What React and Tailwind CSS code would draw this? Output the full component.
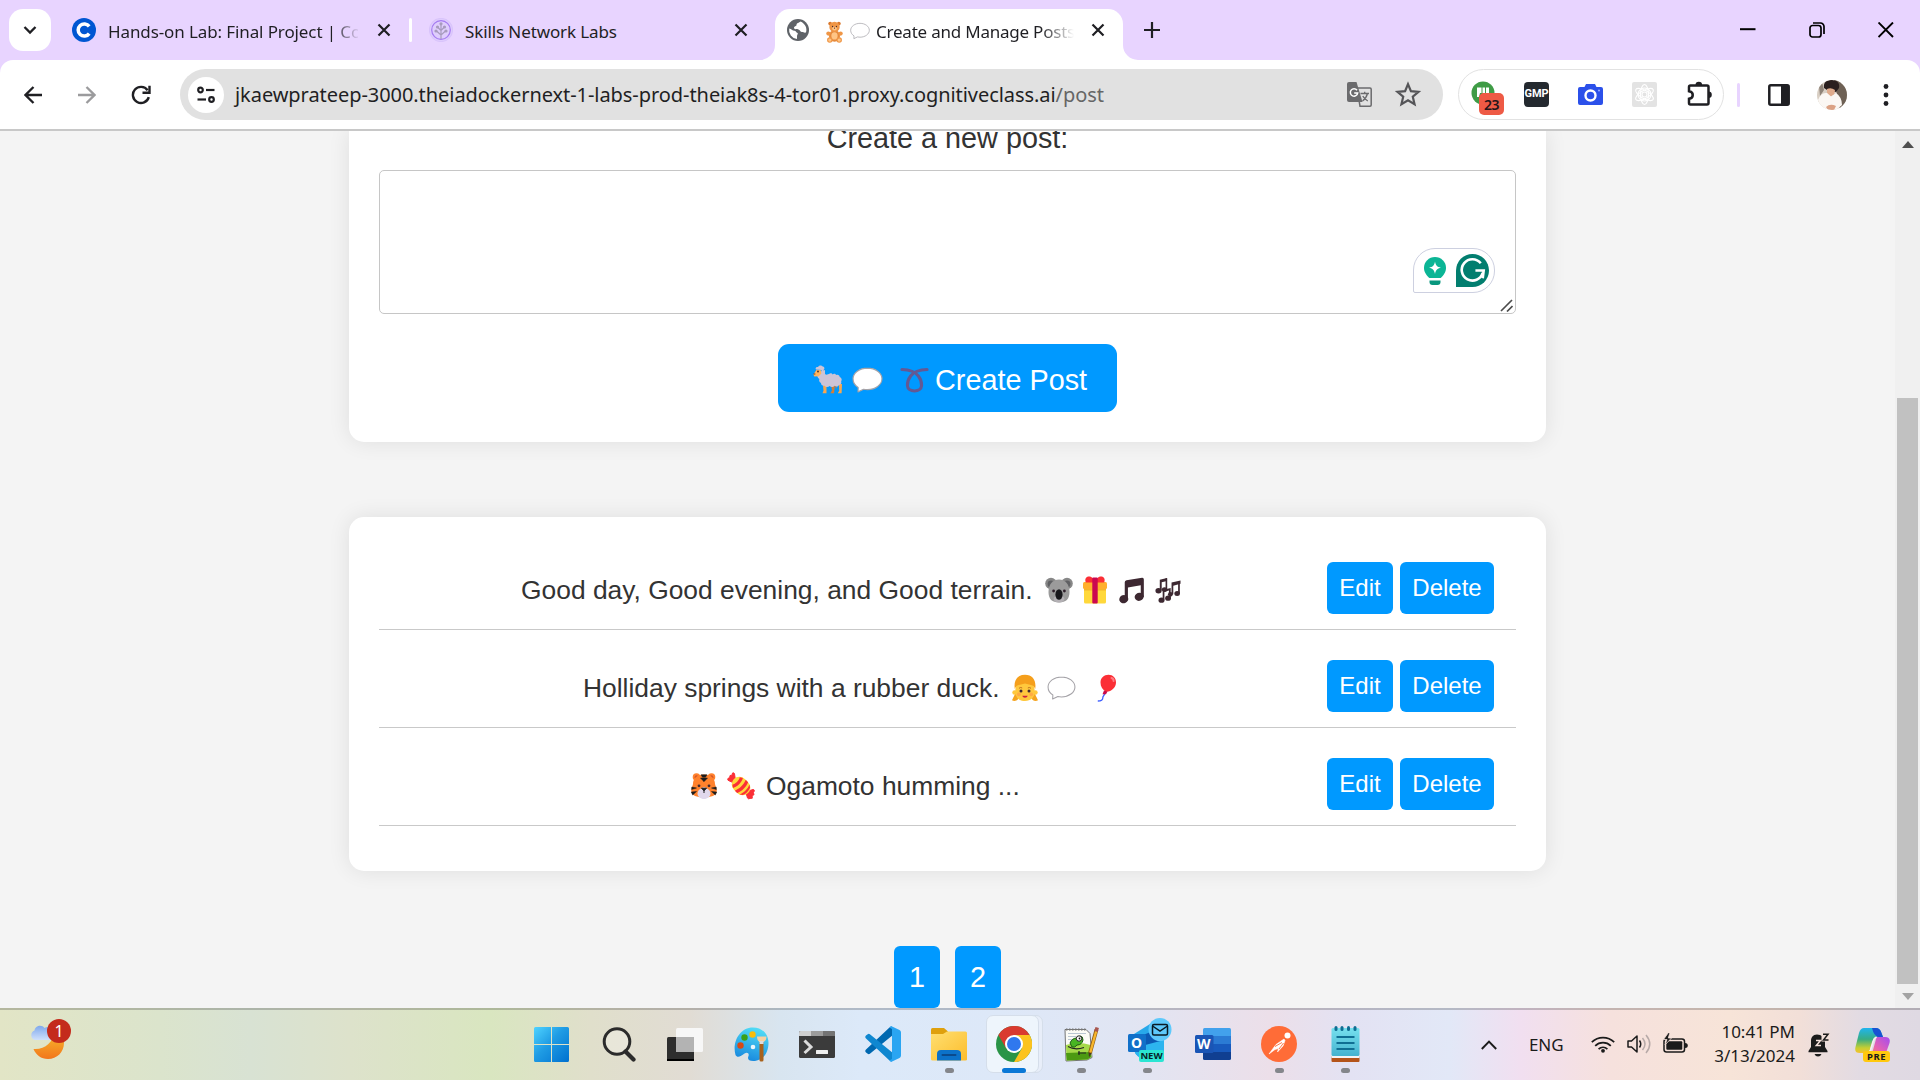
import React from "react";

/* ---------- emoji drawings ---------- */

function Bear({ className }) {
  return (
    <svg viewBox="0 0 24 28" className={className}>
      <ellipse cx="12" cy="19" rx="7" ry="7.5" fill="#e58a3c" />
      <circle cx="6.5" cy="3.2" r="2.4" fill="#d9772c" />
      <circle cx="17.5" cy="3.2" r="2.4" fill="#d9772c" />
      <circle cx="12" cy="7.5" r="6.6" fill="#ef9646" />
      <ellipse cx="12" cy="9.6" rx="3" ry="2.4" fill="#ffc585" />
      <circle cx="9.5" cy="7" r=".8" fill="#402a32" />
      <circle cx="14.5" cy="7" r=".8" fill="#402a32" />
      <circle cx="12" cy="9" r=".8" fill="#402a32" />
      <ellipse cx="12" cy="19" rx="4" ry="4.6" fill="#ffc585" />
      <circle cx="4.2" cy="16" r="2.7" fill="#ef9646" />
      <circle cx="19.8" cy="16" r="2.7" fill="#ef9646" />
      <circle cx="6" cy="24.3" r="3.5" fill="#ef9646" />
      <circle cx="18" cy="24.3" r="3.5" fill="#ef9646" />
      <circle cx="6" cy="24.3" r="2" fill="#ffc585" />
      <circle cx="18" cy="24.3" r="2" fill="#ffc585" />
    </svg>
  );
}

function Speech({ className }) {
  return (
    <svg viewBox="0 0 30 25" className={className}>
      <path
        d="M15 1C7.4 1 1 5.6 1 11.400c0 3.800 2 6.600 5 8.400l-.2 4.200 5.400-2.600c1.200.3 2.500.4 3.800.4 7.600 0 14-4.600 14-10.400S22.600 1 15 1Z"
        fill="#fff"
        stroke="#a5a3a8"
        strokeWidth="1.1"
        strokeLinejoin="round"
      />
    </svg>
  );
}

function Sheep({ className }) {
  return (
    <svg viewBox="0 0 30 29" className={className}>
      <path d="M10 20h3.500v8.200H9.500l1-2.500zM26 19h3l-.4 9.200h-3.800l1.400-2.500z" fill="#f9a74e" />
      <path d="M18 20h4l-1 8.200h-3.600l1.600-3zM22 19h3l-2 5z" fill="#d67d35" />
      <path
        d="M4 8l8-3v4c1.200 1.200 3 .4 4 .1 1-1.300 3-.9 3.600.3 1.200-1 3-.6 3.500.5 2-.8 3.500.3 3.600 2 2 .8 2.600 2.800 1.500 4.300.6 2-.6 3.700-2.300 3.800-.6 1.700-3 2-4.200.8-1.500 1.800-4 1.600-5 .3-1.600 1.500-4.200 1.300-5-.4-2 .6-3.700-.6-3.700-2.600-1.700-.8-2.300-2.400-1.600-4C4.400 12.900 4 10.500 4 8Z"
        fill="#cdc4d6"
      />
      <path d="M.5 9.500 3.500 4.800l4.500.4.300 3.400-2.500 2.600-4.500.2z" fill="#ffb45c" />
      <path d="M3 4.500C1.900 3 3.500 1.500 5 2c.4-1.600 3.600-2.200 4.700-.6C11.600 1.300 12 4 10.500 5c.8 1.300-.5 2.400-2 2.200V5Z" fill="#cdc4d6" />
      <circle cx="5" cy="6.500" r=".9" fill="#402a32" />
      <path d="M.4 8.500h2v1H.6z" fill="#7a4521" />
    </svg>
  );
}

function Curl({ className }) {
  return (
    <svg viewBox="0 0 30 26" className={className} fill="none" stroke="#635994" strokeWidth="3.200" strokeLinecap="round">
      <path d="M2 2.200c7 .2 13 1.500 17 6.600 2.300 3 3.500 6.600 3.300 10 -.2 3.500-3.300 5.500-7.300 5.500s-7.100-2-7.300-5.500c-.2-3.400 1-7 3.300-10 4-5.100 10-6.400 17-6.600" />
    </svg>
  );
}

function Koala({ className }) {
  return (
    <svg viewBox="0 0 28 28" className={className}>
      <circle cx="6" cy="7.500" r="5.800" fill="#878787" />
      <circle cx="22" cy="7.500" r="5.800" fill="#878787" />
      <circle cx="6" cy="8" r="3.400" fill="#5f6063" />
      <circle cx="22" cy="8" r="3.400" fill="#5f6063" />
      <path d="M14 3.500c6.500 0 10.500 5 10.500 12.500 0 7-3.500 10.500-10.500 10.500S3.500 23 3.500 16C3.500 8.500 7.500 3.500 14 3.500Z" fill="#9b9b9b" />
      <ellipse cx="14" cy="23" rx="5.500" ry="3.500" fill="#b4b1b5" />
      <ellipse cx="14" cy="18.500" rx="3.600" ry="5.200" fill="#17171b" />
      <circle cx="8.600" cy="15" r="1.400" fill="#2c1d28" />
      <circle cx="19.400" cy="15" r="1.400" fill="#2c1d28" />
    </svg>
  );
}

function Gift({ className }) {
  return (
    <svg viewBox="0 0 28 28" className={className}>
      <rect x="3" y="11" width="22" height="16.500" rx="1.500" fill="#ffd83b" />
      <path d="M3 12.500h22v2H3Z" fill="#f5b52a" />
      <rect x="2" y="6" width="24" height="7" rx="1.500" fill="#ffb02e" />
      <path d="M14 6.500H4.800C3.500 3 5 .5 8 .5s5 2.500 6 6Zm0 0h9.200C24.500 3 23 .5 20 .5s-5 2.500-6 6Z" fill="#fb2f36" />
      <rect x="11.300" y="1.500" width="5.400" height="26" rx="1" fill="#cb0850" />
    </svg>
  );
}

function Note({ className }) {
  return (
    <svg viewBox="0 0 28 28" className={className} fill="#3d2831">
      <path d="M7 5.500 Q7 3.700 8.800 3.400L25 .8Q26.800.6 26.800 2.500V21h-3.200V8.500L10.300 10.800V23H7Z" />
      <ellipse cx="6" cy="23" rx="4.700" ry="4.200" transform="rotate(-20 6 23)" />
      <ellipse cx="21.900" cy="20.500" rx="4.700" ry="4.200" transform="rotate(-20 22 20.500)" />
    </svg>
  );
}

function Notes({ className }) {
  return (
    <svg viewBox="0 0 28 28" className={className} fill="#3d2831">
      <path d="M6 2.800 13.500 1V4.200L8 5.500V14H6Z" />
      <path d="M12 1.300h1.700V13H12Z" />
      <ellipse cx="4.700" cy="14.200" rx="3.200" ry="2.800" />
      <ellipse cx="11" cy="13" rx="2.800" ry="2.500" />
      <path d="M9 13.500v10h1.800v-8.300l4.700-1.200V22h1.800V11.500Z" />
      <ellipse cx="7.800" cy="24" rx="3.100" ry="2.800" />
      <ellipse cx="14.600" cy="22" rx="3" ry="2.700" />
      <path d="M18.200 5.800 27.500 3.500V7L20 9V18h-1.800Z" />
      <path d="M25 5h1.800v12H25Z" />
      <ellipse cx="17" cy="18" rx="2.500" ry="2.400" />
      <ellipse cx="24" cy="17" rx="2.900" ry="2.600" />
    </svg>
  );
}

function Girl({ className }) {
  return (
    <svg viewBox="0 0 28 28" className={className}>
      <path d="M4.500 19 1 26.200c2 1.300 5.400 1 6.700-2.200ZM23.500 19l3.500 7.200c-2 1.300-5.400 1-6.700-2.200Z" fill="#f5a41f" />
      <circle cx="3.600" cy="18.500" r="2.300" fill="#ffc83d" />
      <circle cx="24.400" cy="18.500" r="2.300" fill="#ffc83d" />
      <path d="M14 7c6.500 0 9.700 4 9.700 10.300 0 6.200-3.900 9.700-9.700 9.700s-9.700-3.500-9.700-9.700C4.300 11 7.500 7 14 7Z" fill="#ffc83d" />
      <path d="M3.800 15C2.500 7 6 .8 14 .8S25.500 7 24.200 15C23 11.800 21.500 11.200 19 10.800L14 9.500l-5 1.300c-2.500.4-4 1-5.200 4.200Z" fill="#f59f1c" />
      <path d="M8 14.300q1.700-1.500 3.200-.3M20 14.300q-1.700-1.500-3.200-.3" fill="none" stroke="#b5651d" strokeWidth=".9" />
      <circle cx="10" cy="17" r="1.500" fill="#402a32" />
      <circle cx="18" cy="17" r="1.500" fill="#402a32" />
      <circle cx="7.800" cy="20.300" r="1.900" fill="#ff8b4a" opacity=".5" />
      <circle cx="20.200" cy="20.300" r="1.900" fill="#ff8b4a" opacity=".5" />
      <path d="M11.300 21.800h5.400c-.5 2.600-4.900 2.600-5.400 0Z" fill="#c9203f" />
    </svg>
  );
}

function Balloon({ className }) {
  return (
    <svg viewBox="0 0 20 28" className={className}>
      <path d="M7.800 18.500c.5 3-2.300 2.800-2 5.500 0 2.300-1.500 3-5 3" fill="none" stroke="#3f5fff" strokeWidth="1.300" />
      <path d="M11.500.8C16 .8 19 4 19 8.500c0 4.800-4.300 9-9.500 9.300C5.500 16 3.500 12.500 3.500 8.500c0-4.500 3.500-7.700 8-7.700Z" fill="#fb2f36" />
      <path d="M7 16.500l3.500 1-1.500 2.800H5.500Z" fill="#ca0b4a" />
      <path d="M14.500 4c1.600.4 2.200 1.600 2 3" fill="none" stroke="#ff7b83" strokeWidth="2" strokeLinecap="round" />
    </svg>
  );
}

function Tiger({ className }) {
  return (
    <svg viewBox="0 0 28 28" className={className}>
      <circle cx="6.500" cy="5" r="3.800" fill="#ff822d" />
      <circle cx="21.500" cy="5" r="3.800" fill="#ff822d" />
      <circle cx="6.500" cy="5.200" r="1.900" fill="#d3552b" />
      <circle cx="21.500" cy="5.200" r="1.900" fill="#d3552b" />
      <path d="M14 2.500c7 0 11 4 11 9.500l1.800 6.500c0 5-6 7-12.800 7s-12.800-2-12.800-7L3 12c0-5.500 4-9.500 11-9.500Z" fill="#ff822d" />
      <path d="M14 15c4 1.500 6.500 3.500 6.500 6.500S17.500 27 14 27s-6.500-2.500-6.500-5.500S10 16.500 14 15Z" fill="#e1d8ec" />
      <path d="M11 2.800h6l-1.500 2.400h-3ZM10.500 6h7l-2.300 2.500L14 9.700l-1.200-1.200ZM1.800 15l4.700 1-4.900 1.500ZM1.300 20l5.200-.5L2.700 23ZM26.200 15l-4.700 1 4.900 1.500ZM26.700 20l-5.200-.5 3.800 3.500Z" fill="#1c1c1c" stroke="#1c1c1c" strokeWidth=".5" />
      <path d="M11.500 16.200h5L14 18.800Z" fill="#1c1c1c" stroke="#1c1c1c" strokeLinejoin="round" />
      <path d="M14 18v3" stroke="#1c1c1c" />
      <circle cx="9" cy="13.800" r="1.400" fill="#402a32" />
      <circle cx="19" cy="13.800" r="1.400" fill="#402a32" />
    </svg>
  );
}

function Candy({ className }) {
  return (
    <svg viewBox="0 0 28 28" className={className}>
      <path d="M8.500 8.500 7.500 1.800Q7 .3 5.500 1L5 3.200 3 3.500 2.700 5.500.9 6.500Q.2 8.500 2 8.800L7 11ZM19.500 19.500 26 17.500Q27.500 17.500 27.300 19l-1 1.800.8 1.700-2 1.500.2 2.200-2.300.2Q21.500 27.500 20.500 26L19 21Z" fill="#fb2f36" stroke="#fb2f36" strokeLinejoin="round" />
      <g transform="rotate(45 14 14)">
        <rect x="4" y="6.300" width="20" height="15.400" rx="7.700" fill="#ffd83b" />
        <path d="M7 8.800C8.800 11.500 8.800 16.500 7 19.200L9.700 21C12 17 12 11 9.700 7ZM13 6.300c2 4.500 2 10.900 0 15.400h3.300c2-4.500 2-10.900 0-15.400ZM19 7c1.900 4.200 1.900 9.800 0 14l2.600-1.800c1.400-3.200 1.400-7.200 0-10.400Z" fill="#fb2f36" />
      </g>
    </svg>
  );
}

/* ---------- browser chrome ---------- */

const CloseX = ({ size = 16, sw = 2.2 }) => (
  <svg width={size} height={size} viewBox="0 0 16 16" stroke="#1f1f23" strokeWidth={sw} fill="none" className="shrink-0">
    <path d="M2.500 2.500 13.500 13.500M13.500 2.500 2.500 13.500" />
  </svg>
);

function TabStrip() {
  return (
    <div className="flex h-[60px] w-full items-start bg-[#e8d4ff] pt-[9px] text-[17px] text-[#1f1f23]">
      <div className="ml-[9px] flex size-[42px] items-center justify-center rounded-[14px] bg-white">
        <svg width="14" height="10" viewBox="0 0 14 10" fill="none" stroke="#1f1f23" strokeWidth="2.300">
          <path d="M1.500 2 7 7.500 12.500 2" />
        </svg>
      </div>

      <div className="ml-[21px] flex h-[42px] w-[340px] items-center">
        <svg width="24" height="24" viewBox="0 0 24 24" className="shrink-0">
          <circle cx="12" cy="12" r="12" fill="#0056d2" />
          <path d="M17.200 8.400A6.100 6.100 0 1 0 17.200 15.600" fill="none" stroke="#fff" strokeWidth="3.500" />
        </svg>
        <div className="ml-3 mt-[3px] w-[252px] overflow-hidden whitespace-nowrap tracking-[-0.110px] [mask-image:linear-gradient(to_right,#000_224px,transparent_252px)]">
          Hands-on Lab: Final Project | Coursera
        </div>
        <div className="ml-[18px]"><CloseX /></div>
        <div className="ml-[17px] h-6 w-[3px] rounded-full bg-white" />
      </div>

      <div className="flex h-[42px] w-[362px] items-center pl-[17px]">
        <svg width="24" height="24" viewBox="0 0 24 24" className="shrink-0" fill="none" stroke="#a57bf0" strokeWidth="1.200">
          <circle cx="12" cy="12" r="11.500" fill="#dfcdfd" stroke="#d9c4fb" />
          <circle cx="12" cy="12" r="9.300" />
          <path d="M12 21V7M12 17 7.500 13M12 17l4.500-4M12 12.500 9 9.500M12 12.500l3-3" stroke="#a79bbd" />
          <g fill="#a79bbd" stroke="none">
            <circle cx="12" cy="5.800" r="1.600" /><circle cx="8.500" cy="9" r="1.600" /><circle cx="15.500" cy="9" r="1.600" />
            <circle cx="7" cy="13" r="1.600" /><circle cx="17" cy="13" r="1.600" />
          </g>
        </svg>
        <span className="ml-[12px] mt-[3px] w-[268px] whitespace-nowrap tracking-[-0.110px]">Skills Network Labs</span>
        <CloseX />
      </div>

      <div className="relative ml-px flex h-[51px] w-[348px] items-start rounded-t-[15px] bg-white">
        <svg className="absolute -left-[15px] bottom-0" width="15" height="15"><path d="M15 0V15H0A15 15 0 0 0 15 0Z" fill="#fff" /></svg>
        <svg className="absolute -right-[15px] bottom-0" width="15" height="15"><path d="M0 0V15H15A15 15 0 0 1 0 0Z" fill="#fff" /></svg>
        <div className="flex h-[42px] items-center pl-[12px]">
          <svg width="22" height="22" viewBox="0 0 22 22" className="shrink-0">
            <circle cx="11" cy="11" r="11" fill="#5f6368" />
            <path d="M13.500 2.500C12 4 9.500 3.800 9.500 6c0 1.500-2.500 1-2.500 3 0 1.500 3 1 4.500 1.500 2 .6 1.500 2.500 3.500 2.500 1.500 0 2 1 4 .5 1.500-4.500-1-9-5.500-11ZM2.200 9.500c2.300.5 3 2 5.300 2.300 1.500.2 1.500 1.700 3 2.200 1 .5-.5 1.500-.5 3v3A9 9 0 0 1 2.200 9.500Z" fill="#fff" />
          </svg>
          <Bear className="ml-[16px] mt-[3px] h-[22px] w-[19px] shrink-0" />
          <Speech className="ml-[6px] mt-[2px] h-[18px] w-[20px] shrink-0" />
          <div className="ml-[6px] mt-[3px] w-[198px] overflow-hidden whitespace-nowrap tracking-[-0.220px] [mask-image:linear-gradient(to_right,#000_165px,transparent_198px)]">
            Create and Manage Posts
          </div>
          <div className="ml-[16px]"><CloseX /></div>
        </div>
      </div>

      <svg width="16" height="16" viewBox="0 0 16 16" className="ml-[21px] mt-[13px]" stroke="#1f1f23" strokeWidth="2.200">
        <path d="M8 0v16M0 8h16" />
      </svg>

      <div className="ml-auto mr-[26px] mt-[13px] flex h-4 items-center gap-[53px]">
        <svg width="16" height="16" viewBox="0 0 16 16"><rect x="0" y="6.200" width="15.500" height="2" fill="#000" /></svg>
        <svg width="16" height="16" viewBox="0 0 16 16" fill="none" stroke="#000" strokeWidth="1.700">
          <rect x="1" y="3.500" width="11" height="11.500" rx="2.500" />
          <path d="M4 1h7.500A3.500 3.500 0 0 1 15 4.500V12" />
        </svg>
        <svg width="16" height="16" viewBox="0 0 16 16" stroke="#000" strokeWidth="1.900"><path d="M.5.5l14.500 14.500M15 .5.5 15" /></svg>
      </div>
    </div>
  );
}

function Extensions() {
  return (
    <div className="ml-[15px] flex h-[51px] w-[266px] items-center rounded-full border-[1.500px] border-[#e2e2e2] pl-[12px]">
      <div className="relative h-[27px] w-[35px]">
        <svg width="24" height="24" viewBox="0 0 24 24" className="absolute left-0 top-0">
          <circle cx="12" cy="12" r="11.500" fill="#3f9c46" />
          <path d="M6 6.500h12V12H9l-1 4H6Z" fill="#fff" />
          <path d="M11 6v6M14.500 6v6" stroke="#3f9c46" />
        </svg>
        <div className="absolute left-[8px] top-[12px] flex h-[22px] w-[25px] items-center justify-center rounded-[5px] bg-[#ee5a45] text-[14px] font-semibold tracking-[-0.500px] text-[#26151a]">23</div>
      </div>
      <div className="ml-[18px] flex h-[25px] w-[25px] items-center justify-center rounded-[4px] bg-[#24292f] font-['Roboto'] text-[11px] font-bold text-white">GMP</div>
      <svg width="25" height="25" viewBox="0 0 25 25" className="ml-[29px]">
        <path d="M2 5h4.500L8 2h9l1.500 3H23q2 0 2 2v14q0 2-2 2H2q-2 0-2-2V7q0-2 2-2Z" fill="#2b50ea" />
        <circle cx="12.500" cy="13.500" r="5" fill="none" stroke="#fff" strokeWidth="2.400" />
        <circle cx="21" cy="8.500" r="1" fill="#9db0ff" />
      </svg>
      <svg width="25" height="25" viewBox="0 0 25 25" className="ml-[29px]">
        <rect width="25" height="25" rx="2" fill="#e3e3e3" />
        <g fill="none" stroke="#fff" strokeWidth="1.100">
          <ellipse cx="12.500" cy="12.500" rx="10" ry="4" transform="rotate(30 12.500 12.500)" />
          <ellipse cx="12.500" cy="12.500" rx="10" ry="4" transform="rotate(90 12.500 12.500)" />
          <ellipse cx="12.500" cy="12.500" rx="10" ry="4" transform="rotate(150 12.500 12.500)" />
          <circle cx="12.500" cy="12.500" r="2.500" />
          <circle cx="12.500" cy="12.500" r="6.500" />
        </g>
      </svg>
      <svg width="26" height="26" viewBox="0 0 26 26" className="mb-[3px] ml-[29px]">
        <path d="M4.500 5.500H21a1.500 1.500 0 0 1 1.500 1.500V23a1.500 1.500 0 0 1-1.500 1.500H4.500A1.500 1.500 0 0 1 3 23V18.800c5-.8 5-6.800 0-7.600V7a1.500 1.500 0 0 1 1.500-1.500Z" fill="none" stroke="#1f1f23" strokeWidth="2.500" />
        <path d="M9.500 5a3.300 3.300 0 0 1 6.600 0ZM22.500 11.500a3.300 3.300 0 0 1 0 6.600Z" fill="#1f1f23" />
      </svg>
    </div>
  );
}

function Toolbar() {
  return (
    <div className="h-[69px] w-full bg-[#e8d4ff]">
      <div className="flex h-[69px] w-full items-center rounded-t-[13px] bg-white pl-6">
        <svg width="18" height="18" viewBox="0 0 18 18" fill="none" stroke="#1f1f23" strokeWidth="2.300">
          <path d="M18 9H1.800M9.500 1 1.500 9l8 8" />
        </svg>
        <svg width="18" height="18" viewBox="0 0 18 18" fill="none" stroke="#9b9b9d" strokeWidth="2.300" className="ml-[36px]">
          <path d="M0 9h16.200M8.500 1l8 8-8 8" />
        </svg>
        <svg width="20" height="20" viewBox="0 0 20 20" fill="none" stroke="#1f1f23" strokeWidth="2.400" className="ml-[35px]">
          <path d="M17.800 12.200A8.100 8.100 0 1 1 16.600 5.200" />
          <path d="M18.500.800V7.800H11.500" />
        </svg>
        <div className="ml-[29px] flex h-[51px] w-[1263px] shrink-0 items-center rounded-full bg-[#e1e1e1] pl-2">
          <div className="flex size-9 shrink-0 items-center justify-center rounded-full bg-white">
            <svg width="18" height="18" viewBox="0 0 18 18" fill="none" stroke="#1f1f23" strokeWidth="2.200">
              <circle cx="3.500" cy="4" r="2.300" /><path d="M9 4h8.500" />
              <circle cx="14.500" cy="13.500" r="2.300" /><path d="M.5 13.500H9" />
            </svg>
          </div>
          <span className="ml-[11px] w-[1101px] shrink-0 whitespace-nowrap text-[20px] tracking-[-0.060px] text-[#1f1f23]">
            jkaewprateep-3000.theiadockernext-1-labs-prod-theiak8s-4-tor01.proxy.cognitiveclass.ai<span className="text-[#666]">/post</span>
          </span>
          <svg width="25" height="25" viewBox="0 0 25 25" className="ml-[11px]">
            <path d="M10 6h13q1.200 0 1.200 1.200V23q0 1.200-1.200 1.200H13Z" fill="none" stroke="#6b6b6d" strokeWidth="1.500" />
            <path d="M2 0H9.500L15.500 20H2Q0 20 0 18V2Q0 0 2 0Z" fill="#6b6b6d" />
            <path d="M10 8.200A3.700 3.700 0 1 0 10.700 11H7.200" fill="none" stroke="#fff" strokeWidth="1.500" />
            <path d="M13.500 11.500H22M17.700 9.800v1.700M20.500 11.500c-.8 3.400-2.800 5.800-5 7.500M15.800 14c1 2 3 4 5 5" fill="none" stroke="#6b6b6d" strokeWidth="1.300" />
          </svg>
          <svg width="28" height="28" viewBox="0 0 24 24" className="ml-[22px]" fill="none" stroke="#555558" strokeWidth="1.900">
            <path d="m12 2.700 2.500 6 6.500.6-4.900 4.200 1.500 6.300L12 16.500l-5.600 3.300 1.500-6.300L3 9.300l6.500-.6Z" />
          </svg>
        </div>
        <Extensions />
        <div className="ml-[13px] h-6 w-[3px] rounded-full bg-[#e8d4ff]" />
        <svg width="22" height="22" viewBox="0 0 22 22" className="ml-[28px]">
          <rect x="1.300" y="1.300" width="19.400" height="19.400" rx="1.500" fill="none" stroke="#1f1f23" strokeWidth="2.500" />
          <rect x="13" y="1" width="8" height="20" fill="#1f1f23" />
        </svg>
        <svg width="30" height="30" viewBox="0 0 30 30" className="ml-[27px]">
          <clipPath id="avatar"><circle cx="15" cy="15" r="15" /></clipPath>
          <g clipPath="url(#avatar)">
            <rect width="30" height="30" fill="#d9cfc4" />
            <path d="M17 0h13v30h-7Z" fill="#6e6155" />
            <path d="M2 6 5 2l2 8-4 6Z" fill="#8f8378" />
            <path d="M7 8C6 2 10 0 15 0s8 3 7 8l-3 4-9-2Z" fill="#2a1f1e" />
            <path d="M10 9q4-2 8 1l-1 5-4 1.500-3-3.500Z" fill="#e0ab8c" />
            <path d="M1 20q3-8 9-7l4 3.500 5-3.500q6 4 6 12l-6 5H5Z" fill="#fbf7f3" />
            <path d="M9 27q4-4 10-1l-2 4h-6Z" fill="#dba184" />
          </g>
        </svg>
        <svg width="6" height="24" viewBox="0 0 6 24" className="ml-[36px]" fill="#1f1f23">
          <circle cx="3" cy="3.500" r="2.400" /><circle cx="3" cy="12" r="2.400" /><circle cx="3" cy="20.500" r="2.400" />
        </svg>
      </div>
    </div>
  );
}

/* ---------- web page ---------- */

const card = "w-[1197px] shrink-0 bg-white px-[30px] shadow-[0_0_22px_rgba(0,0,0,0.09)]";

function PostRow({ children, indent }) {
  return (
    <div className="flex h-[98px] items-start border-b border-[#c9c9c9] pt-[30px]">
      <div className={"flex h-14 w-[948px] shrink-0 items-center whitespace-nowrap text-[26.400px] leading-[56px] text-[#333] " + indent}>
        {children}
      </div>
      <button className="h-[52px] w-[66px] rounded-[6px] bg-[#0099ff] text-[24px] leading-[52px] text-white">Edit</button>
      <button className="ml-[7px] h-[52px] w-[94px] rounded-[6px] bg-[#0099ff] text-[24px] leading-[52px] text-white">Delete</button>
    </div>
  );
}

function Grammar() {
  return (
    <div className="absolute right-[20px] top-[77px] flex h-[45px] w-[82px] items-center rounded-bl-[2px] rounded-br-[22px] rounded-t-[22px] border-[1.500px] border-[#cdd0e0] bg-white pl-[9px]">
      <svg width="24" height="30" viewBox="0 0 24 30">
        <path d="M12 1C5.900 1 1 5.800 1 11.800c0 4.600 2.500 7.600 5.300 10.200h11.400c2.800-2.600 5.300-5.600 5.300-10.200C23 5.800 18.100 1 12 1Z" fill="#0bb595" />
        <path d="M6.500 24.500h11v1.500q0 3-3 3h-5q-3 0-3-3Z" fill="#08977e" />
        <path d="M12 5.500c.8 4 2 5.300 6 6.200-4 .9-5.200 2.200-6 6.200-.8-4-2-5.300-6-6.200 4-.9 5.200-2.200 6-6.200Z" fill="#fff" />
      </svg>
      <svg width="33" height="33" viewBox="0 0 34 34" className="ml-[9px]">
        <path d="M17 0A17 17 0 0 1 17 34H0V17A17 17 0 0 1 17 0Z" fill="#027e6f" />
        <path d="M25.500 9.500A11 11 0 1 0 27.500 19.500" fill="none" stroke="#fff" strokeWidth="2.700" />
        <path d="M20 17h8.500l-1 8" fill="none" stroke="#fff" strokeWidth="2.700" />
      </svg>
    </div>
  );
}

function Page() {
  return (
    <div className="flex h-[877px] w-full overflow-hidden bg-[#f4f4f4] font-['Liberation_Sans',sans-serif]">
      <div className="flex w-[1895px] flex-col items-center">
        <div className={card + " h-[311px] rounded-b-[15px] text-center"}>
          <div className="-mt-[10px] h-[49px] text-[28.800px] leading-[34px] text-[#333]">Create a new post:</div>
          <div className="relative h-[144px] w-full rounded-[5px] border border-[#c6c6c6]">
            <Grammar />
            <svg width="13" height="13" viewBox="0 0 13 13" className="absolute bottom-[1px] right-[2px]" stroke="#4c4c4c" strokeWidth="1.700">
              <path d="M1 12 12 1M7 12.500l5.500-5.500" />
            </svg>
          </div>
          <button className="mx-auto mt-[30px] flex h-[68px] w-[339px] items-center rounded-[11px] bg-[#0099ff] pl-[35px] pt-[4px] text-[28.800px] leading-[36px] text-white">
            <Sheep className="mb-px h-[29px] w-[30px]" />
            <Speech className="ml-[9px] h-[26px] w-[31px]" />
            <Curl className="ml-[17px] h-[26px] w-[29px]" />
            <span className="ml-[6px] whitespace-nowrap">Create Post</span>
          </button>
        </div>

        <div className={card + " mt-[75px] h-[354px] rounded-[15px] pt-[15px]"}>
          <PostRow indent="pl-[142px]">
            Good day, Good evening, and Good terrain.
            <Koala className="ml-[12px] size-[28px]" />
            <Gift className="ml-[8px] size-[28px]" />
            <Note className="ml-[9px] size-[27px]" />
            <Notes className="ml-[9px] size-[27px]" />
          </PostRow>
          <PostRow indent="pl-[204px]">
            Holliday springs with a rubber duck.
            <Girl className="ml-[11px] size-[28px]" />
            <Speech className="ml-[8px] h-[24px] w-[29px]" />
            <Balloon className="ml-[21px] h-[28px] w-[20px]" />
          </PostRow>
          <PostRow indent="pl-[311px]">
            <Tiger className="size-[28px]" />
            <Candy className="ml-[9px] size-[28px]" />
            <span className="ml-[11px]">Ogamoto humming ...</span>
          </PostRow>
        </div>

        <div className="mt-[75px] flex gap-[15px]">
          {["1", "2"].map((n) => (
            <button key={n} className="h-[62px] w-[46px] rounded-[6px] bg-[#0099ff] text-[28.800px] leading-[62px] text-white">{n}</button>
          ))}
        </div>
      </div>

      <div className="flex w-[25px] flex-col items-center bg-[#f0f0f0]">
        <svg width="12" height="7" viewBox="0 0 12 7" className="mt-[10px]"><path d="M0 7 6 0l6 7Z" fill="#505050" /></svg>
        <div className="mt-[250px] h-[586px] w-[21px] bg-[#c1c1c1]" />
        <svg width="12" height="7" viewBox="0 0 12 7" className="mt-[9px]"><path d="M0 0h12L6 7Z" fill="#a3a3a3" /></svg>
      </div>
    </div>
  );
}

/* ---------- taskbar ---------- */

function Slot({ children, dot }) {
  return (
    <div className="relative flex h-[68px] w-[66px] items-center justify-center">
      {children}
      {dot && <div className="absolute bottom-[5px] left-[29px] h-[5px] w-[9px] rounded-full bg-[#84868b]" />}
    </div>
  );
}

function WindowsIcon() {
  return (
    <svg width="35" height="35" viewBox="0 0 35 35" className="-ml-[3px] mt-px">
      <linearGradient id="win" x1="0" y1="0" x2="1" y2="1">
        <stop offset="0" stopColor="#4fd3ff" /><stop offset=".45" stopColor="#1f9ce4" /><stop offset="1" stopColor="#0070cf" />
      </linearGradient>
      <path d="M1.500 0H17v17H0V1.500Q0 0 1.500 0ZM18 0h15.500Q35 0 35 1.500V17H18ZM0 18h17v17H1.500Q0 35 0 33.500ZM18 18h17v15.500q0 1.500-1.500 1.500H18Z" fill="url(#win)" />
    </svg>
  );
}

function PaintIcon() {
  return (
    <svg width="35" height="35" viewBox="0 0 35 35">
      <linearGradient id="paint" x1=".6" y1="0" x2=".3" y2="1">
        <stop offset="0" stopColor="#51dcf6" /><stop offset="1" stopColor="#1686dd" />
      </linearGradient>
      <path d="M19 .5C28 .5 34.500 7 34.500 16c0 8-4 17-13.500 18-6 .5-8-1.500-6.500-5 1-2.800-1.500-4.500-4-2.500C7 29 3.500 31.500 1.500 28-2 16 5 .5 19 .5Z" fill="url(#paint)" />
      <circle cx="6.500" cy="18.500" r="3.200" fill="#d84a16" />
      <circle cx="10.500" cy="10.500" r="3.200" fill="#3aa018" />
      <circle cx="18.500" cy="7.500" r="3.200" fill="#f8bd09" />
      <circle cx="19" cy="20" r="2.300" fill="#eaf6fc" />
      <rect x="25.500" y="14" width="4" height="20.500" rx="1.500" fill="#a8621c" />
      <path d="M23 9.500h9.500q0 4-3 5.500h-4q-2.500-1.500-2.500-5.500Z" fill="#f5d2a4" />
      <rect x="25.500" y="14" width="4" height="3" fill="#ddd" />
    </svg>
  );
}

function OutlookIcon() {
  return (
    <div className="relative ml-[6px] h-[44px] w-[44px]">
      <svg width="44" height="44" viewBox="0 0 44 44" className="absolute left-0 top-0">
        <path d="M6 16 22 6l14 10v23H12q-6-3-6-8Z" fill="#28a8ea" />
        <path d="M15 17 33 10l3 12-18 9Z" fill="#0c59b4" />
        <path d="M6 30 36 22v18H12q-6-4-6-10Z" fill="#2db4ef" />
        <rect x="0" y="16" width="18" height="18" rx="1.500" fill="#1170c9" />
        <circle cx="32" cy="11.500" r="11.500" fill="#5ec9fb" />
        <rect x="24.500" y="6.500" width="15" height="10.500" rx="1.500" fill="none" stroke="#0a1b26" strokeWidth="1.500" />
        <path d="m24.500 8 7.500 5 7.500-5" fill="none" stroke="#0a1b26" strokeWidth="1.500" />
      </svg>
      <span className="absolute left-[3px] top-[17px] text-[14px] font-bold leading-[16px] text-white">O</span>
      <span className="absolute left-[11px] top-[32px] h-[12px] w-[25px] rounded-[2px] bg-[#2be5d3] text-center text-[9.500px] font-bold leading-[12px] text-[#06252a]">NEW</span>
    </div>
  );
}

function NotepadPlusIcon() {
  return (
    <svg width="35" height="35" viewBox="0 0 35 35">
      <path d="M1 2.500h21l4 4 2 24-5 2.500-21 1Z" fill="#fbfbf6" stroke="#666" strokeWidth=".9" />
      <path d="M2 18q12-4 24.500 0l1 12-4 2.500-21 .9Z" fill="#a5d949" />
      <path d="M2 26l24.500-1 .8 5-4 2.500-20.500 1Z" fill="#4c9a12" />
      <path d="M4 6.500h18M4 9.500h8M4 12.500h5" stroke="#b9c6d2" />
      <path d="M6 16q2-5 7-5l3-2q3 0 3 4-1 5-6 5-2 3-5 2Z" fill="#48b522" stroke="#1c5c12" />
      <circle cx="15" cy="11.500" r="2.700" fill="#fff" stroke="#222" /><circle cx="15.500" cy="11.500" r=".9" fill="#111" />
      <path d="M4 19.500q7 4 16 1M14 26h8M15 24v4" stroke="#222" strokeWidth="1.200" fill="none" />
      <path d="M2 2.500h20" stroke="#777" strokeWidth="2" strokeDasharray="1.500 1.500" />
      <path d="M32.500 2.500 26 26" stroke="#8b5a12" strokeWidth="3.800" /><path d="M32.500 3 26.300 25.500" stroke="#f8b62c" strokeWidth="2.400" />
      <path d="M33.200.500 32 4.500" stroke="#a8564e" strokeWidth="3.600" />
      <path d="m24.500 25.500 3 .8-2.500 4Z" fill="#4a3520" />
    </svg>
  );
}

function Taskbar() {
  return (
    <div className="flex h-[72px] w-full items-start border-t-2 border-black/20 bg-[linear-gradient(to_right,#e2e5c6_0px,#dbe4cc_160px,#d8e2d3_250px,#dde2cb_350px,#d9e6c0_490px,#e0dfcb_590px,#e1dcd4_690px,#d8e5f0_780px,#dce9f9_860px,#dde8f8_1000px,#e1e5f3_1130px,#ecdfe9_1270px,#e3e2f3_1350px,#e2e8f7_1450px,#f1dff0_1520px,#f6e1dd_1610px,#f7e4d8_1730px,#f2dfd8_1800px,#e2dbe3_1860px,#dfd9e3_1920px)] bg-origin-border">
      <div className="w-[520px] pl-[30px] pt-[9px]">
        <div className="relative h-[41px] w-[42px]">
          <svg width="42" height="41" viewBox="0 0 42 41">
            <linearGradient id="moon" x1="0" y1="0" x2="0" y2="1"><stop offset="0" stopColor="#f8c02e" /><stop offset="1" stopColor="#f2761c" /></linearGradient>
            <linearGradient id="cloud" x1="0" y1="0" x2="0" y2="1"><stop offset="0" stopColor="#7fa8ec" /><stop offset="1" stopColor="#cfe0fb" /></linearGradient>
            <path d="M24 11c6 3 10 7 10 13 0 9-7 16-16 16C11 40 6 36 3.500 30 14 31 24 24 24 11Z" fill="url(#moon)" />
            <path d="M5 21a5 5 0 0 1-.5-9.500C5 6.500 12 5 14.500 9c4-2.500 9 .5 8.500 5v7Z" fill="url(#cloud)" />
          </svg>
          <div className="absolute left-[17px] top-0 flex size-[24px] items-center justify-center rounded-full bg-[#c42b1c] text-[16px] leading-none text-white">1</div>
        </div>
      </div>

      <div className="flex">
        <Slot><WindowsIcon /></Slot>
        <Slot>
          <svg width="34" height="35" viewBox="0 0 34 35" fill="none" stroke="#2b2b2b">
            <circle cx="15" cy="14.500" r="12.800" strokeWidth="3" fill="#ffffff40" /><path d="m23.500 24.500 8 8" strokeWidth="4.300" strokeLinecap="round" />
          </svg>
        </Slot>
        <Slot>
          <svg width="36" height="35" viewBox="0 0 36 35">
            <rect x="0" y="10" width="27" height="24" rx="1.500" fill="#2e2e2e" /><rect x="0" y="32" width="27" height="2" fill="#000" />
            <rect x="9" y="1" width="27" height="24" rx="1.500" fill="#f7f7f7" /><rect x="9" y="10" width="18" height="15" fill="#b3b3b3" />
          </svg>
        </Slot>
        <Slot><PaintIcon /></Slot>
        <Slot>
          <svg width="36" height="27" viewBox="0 0 36 27">
            <rect width="36" height="27" rx="1.500" fill="#3b3b3b" /><path d="M1.500 0H12v5H0V1.500Q0 0 1.500 0Z" fill="#cfcfcf" /><rect x="12" width="12" height="5" fill="#9c9c9c" /><path d="M24 0h10.500Q36 0 36 1.500V5H24Z" fill="#747474" />
            <path d="m5.500 9.500 6.500 6.500-6.500 6" fill="none" stroke="#dcdcdc" strokeWidth="3" /><rect x="17" y="19" width="12" height="4" rx=".5" fill="#efefef" />
          </svg>
        </Slot>
        <Slot>
          <svg width="36" height="36" viewBox="0 0 36 36">
            <path d="M1 23.500Q-.5 25 1 26.500l1.700 1.300q1 .8 2.200 0L27 9.800V.5Q25.500.5 24.500 1.500Z" fill="#0068b0" />
            <path d="M1 12.500Q-.5 11 1 9.500l1.700-1.300q1-.8 2.200 0L27 26.200v9.300q-1.500 0-2.500-1Z" fill="#0f87d0" />
            <path d="M26.500.2 34.500 4Q36 4.800 36 6.500v23q0 1.700-1.500 2.500L26.500 35.800Q25 35.800 24.500 34.500L27 33V3L24.500 1.500Q25 .2 26.500.2Z" fill="#2aa5f2" />
          </svg>
        </Slot>
        <Slot dot>
          <svg width="36" height="33" viewBox="0 0 36 33">
            <path d="M1.500 0H13l4 3.500-4 5H0V1.500Q0 0 1.500 0Z" fill="#dfa00d" />
            <linearGradient id="fold" x1="0" y1="0" x2="1" y2="1"><stop offset="0" stopColor="#ffdf71" /><stop offset="1" stopColor="#fcbd2c" /></linearGradient>
            <path d="M0 6h12l4-2.500h18.500Q36 3.500 36 5v26.500q0 1-1.500 1H1.500Q0 32.500 0 31Z" fill="url(#fold)" />
            <path d="M6 32.500V26q0-4 4-4h16q4 0 4 4v6.500Z" fill="#0c72c9" /><rect x="10.500" y="26" width="15" height="2" rx="1" fill="#0b4a8c" />
          </svg>
        </Slot>
        <div className="relative flex h-[68px] w-[66px] items-center justify-center">
          <div className="absolute left-[9px] top-[5px] h-[58px] w-[52px] rounded-[7px] border border-[#d5deea] bg-white/30" />
          <div className="absolute left-[4px] top-[5px] h-[58px] w-[53px] rounded-[7px] border-[1.500px] border-[#d5deea] bg-[#eef5fc]" />
          <svg width="36" height="36" viewBox="0 0 36 36" className="relative -left-px">
            <circle cx="18" cy="18" r="18" fill="#2a9447" />
            <path d="M18 9H33.600A18 18 0 0 1 18 36L25.800 22.500Z" fill="#fcc31e" />
            <path d="M2.400 9A18 18 0 0 1 33.600 9H18L10.200 22.500Z" fill="#d93a2f" />
            <circle cx="18" cy="18" r="9" fill="#fff" /><circle cx="18" cy="18" r="7" fill="#3078ee" />
          </svg>
          <div className="absolute bottom-[5px] left-[20px] h-[5px] w-[24px] rounded-full bg-[#0a78d6]" />
        </div>
        <Slot dot><NotepadPlusIcon /></Slot>
        <Slot dot><div className="-mt-[8px]"><OutlookIcon /></div></Slot>
        <Slot>
          <div className="relative h-[32px] w-[36px]">
            <svg width="36" height="32" viewBox="0 0 36 32">
              <path d="M9.500 0h25Q36 0 36 1.500V8H8V1.500Q8 0 9.500 0Z" fill="#42a1ec" /><rect x="8" y="8" width="28" height="8" fill="#2b7bd4" /><rect x="8" y="16" width="28" height="8" fill="#185abd" />
              <path d="M8 24h28v6.500q0 1.500-1.500 1.500h-25Q8 32 8 30.500Z" fill="#103f91" /><rect y="7" width="18.500" height="18" rx="1.500" fill="#1a55b5" />
            </svg>
            <span className="absolute left-[2px] top-[8px] text-[14px] font-bold leading-[16px] text-white">W</span>
          </div>
        </Slot>
        <Slot dot>
          <svg width="36" height="36" viewBox="0 0 36 36">
            <circle cx="18" cy="18" r="18" fill="#ff6c37" />
            <circle cx="26.500" cy="9.500" r="3" fill="#fff" />
            <path d="M23 13 15 18.500l-3 4L8 28l6-4.500 3.500-1-1 3.500 5.500-6 2-5.500Z" fill="#fff" stroke="#fff" strokeWidth=".6" strokeLinejoin="round" />
            <path d="m14 20.500 7-4M18 23l4.500-6" stroke="#ff6c37" strokeWidth=".9" />
          </svg>
        </Slot>
        <Slot dot>
          <svg width="29" height="36" viewBox="0 0 29 36">
            <linearGradient id="npad" x1="0" y1="0" x2="0" y2="1"><stop offset="0" stopColor="#76e0ee" /><stop offset="1" stopColor="#45b3cf" /></linearGradient>
            <rect x=".5" y="30" width="28" height="6" rx="1" fill="#b4541a" /><rect x=".5" y="28" width="28" height="4" fill="#f4f4f4" />
            <rect x=".5" y="2" width="28" height="28" rx="1.500" fill="url(#npad)" />
            <g fill="#0f6e93"><rect x="3.500" y="0" width="3" height="5" rx="1.500" /><rect x="9.500" y="0" width="3" height="5" rx="1.500" /><rect x="16" y="0" width="3" height="5" rx="1.500" /><rect x="22.500" y="0" width="3" height="5" rx="1.500" /></g>
            <path d="M5.500 11h18M5.500 17h18M5.500 23h18" stroke="#0f6e93" strokeWidth="1.800" />
          </svg>
        </Slot>
      </div>

      <div className="flex h-[70px] flex-1 items-center pl-[103px] text-[17px] text-[#1b1b1b]">
        <svg width="16" height="10" viewBox="0 0 16 10" fill="none" stroke="#1b1b1b" strokeWidth="1.900" className="mb-px"><path d="M.8 9 8 1.500 15.200 9" /></svg>
        <span className="ml-[32px] w-[35px] tracking-[-0.100px]">ENG</span>
        <svg width="24" height="18" viewBox="0 0 24 18" fill="none" stroke="#1b1b1b" strokeWidth="1.700" className="mb-[3px] ml-[27px]">
          <path d="M.8 7.200a16 16 0 0 1 22.400 0M4.200 10.800a11 11 0 0 1 15.600 0M7.600 14.100a6.200 6.200 0 0 1 8.800 0" /><circle cx="12" cy="15.800" r="1.900" fill="#1b1b1b" stroke="none" />
        </svg>
        <svg width="25" height="20" viewBox="0 0 25 20" fill="none" stroke="#1b1b1b" strokeWidth="1.500" className="mb-[2px] ml-[12px]">
          <path d="M1 7h3.500L10 2v16l-5.500-5H1Z" strokeLinejoin="round" /><path d="M12.500 6.500q2.500 3.500 0 7" /><path d="M15.500 4q5 6 0 12M19 1q7.500 9 0 18" stroke="#b7aaa8" />
        </svg>
        <svg width="25" height="20" viewBox="0 0 25 20" className="mb-[4px] ml-[11px]">
          <rect x="1" y="6" width="20.500" height="13" rx="2.500" fill="none" stroke="#1b1b1b" strokeWidth="1.500" /><rect x="3.300" y="8.300" width="16" height="8.500" rx="1" fill="#1b1b1b" /><path d="M22 10q2.800 0 2.800 2.500T22 15Z" fill="#1b1b1b" />
          <path d="M5.500-.5.500 6.500H4L2 12 8.500 5H5.300L7-.5Z" fill="#1b1b1b" stroke="#f6e2dc" strokeWidth=".8" />
        </svg>
        <div className="mb-[2px] ml-[17px] flex w-[90px] flex-col items-end whitespace-nowrap text-right leading-[24px]">
          <span>10:41 PM</span>
          <span>3/13/2024</span>
        </div>
        <svg width="22" height="24" viewBox="0 0 22 24" className="ml-[13px]">
          <path d="M9 1.500C4.800 1.500 3 4.500 3 8v6L.5 18v1.200h19V18L17 14V8c0-3.500-3.800-6.500-8-6.500ZM6.500 21q1 2.500 3.500 2.500t3.500-2.500Z" fill="#1b1b1b" />
          <rect x="13.500" y="0" width="8.500" height="8.500" fill="#f2dfd8" />
          <path d="M15 1.200h5L15.500 7h5" fill="none" stroke="#1b1b1b" strokeWidth="1.500" /><path d="M8 7.500h4.500L8.300 12.500H13" fill="none" stroke="#f4e0da" strokeWidth="1.500" />
        </svg>
        <div className="relative ml-[25px] h-[34px] w-[36px]">
          <svg width="35" height="34" viewBox="0 0 35 34">
            <linearGradient id="cpa" x1="0" y1="0" x2="0" y2="1"><stop offset="0" stopColor="#1fb4ee" /><stop offset=".45" stopColor="#38ad83" /><stop offset=".8" stopColor="#c8cf31" /><stop offset="1" stopColor="#f5c12f" /></linearGradient>
            <linearGradient id="cpb" x1="1" y1="0" x2="0" y2="1"><stop offset="0" stopColor="#a34df0" /><stop offset=".6" stopColor="#e661b2" /><stop offset="1" stopColor="#f98a5a" /></linearGradient>
            <path d="M9 0h12q4 0 5.500 5l1.500 4H22q-3 0-4 3.500L15 22q-1 3-4 3H5q-6 0-4.500-6L4 5Q5.500 0 9 0Z" fill="url(#cpa)" />
            <path d="M17 0h4q4 0 5.500 5l1.500 4H23Q19 8 17 0Z" fill="#1752d3" />
            <path d="M22 9h8q6 0 4.500 6L32 22q-1.500 5-5 5H14q3-1 4-5l2.500-9Q21 10 22 9Z" fill="url(#cpb)" />
            <path d="M21.500 9q-2.500 1-3.500 4.500L15.500 22q-.8 2.500-3 3" fill="none" stroke="#f6eef4" strokeWidth="1.600" />
          </svg>
          <span className="absolute left-[8px] top-[23px] h-[11px] w-[27px] rounded-[3px] bg-[#ffc90e] text-center text-[9.500px] font-bold leading-[11px] tracking-[0.500px] text-[#1b1b1b]">PRE</span>
        </div>
      </div>
    </div>
  );
}

export default function App() {
  return (
    <div className="flex h-[1080px] w-[1920px] flex-col overflow-hidden bg-white font-['Noto_Sans','Open_Sans',sans-serif]">
      <TabStrip />
      <Toolbar />
      <div className="h-[2px] w-full shrink-0 bg-[#c8c8c8]" />
      <Page />
      <Taskbar />
    </div>
  );
}
